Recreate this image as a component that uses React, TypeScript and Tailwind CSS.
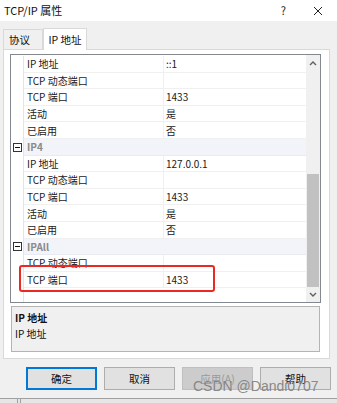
const font = { fontFamily: '"Noto Sans CJK SC", "Noto Sans", sans-serif' };

type Row = { kind: "item"; name: string; value: string } | { kind: "cat"; name: string };

const rows: Row[] = [
  { kind: "item", name: "IP 地址", value: "::1" },
  { kind: "item", name: "TCP 动态端口", value: "" },
  { kind: "item", name: "TCP 端口", value: "1433" },
  { kind: "item", name: "活动", value: "是" },
  { kind: "item", name: "已启用", value: "否" },
  { kind: "cat", name: "IP4" },
  { kind: "item", name: "IP 地址", value: "127.0.0.1" },
  { kind: "item", name: "TCP 动态端口", value: "" },
  { kind: "item", name: "TCP 端口", value: "1433" },
  { kind: "item", name: "活动", value: "是" },
  { kind: "item", name: "已启用", value: "否" },
  { kind: "cat", name: "IPAll" },
  { kind: "item", name: "TCP 动态端口", value: "" },
  { kind: "item", name: "TCP 端口", value: "1433" },
];

function MinusBox() {
  return (
    <div className="w-[9px] h-[9px] border border-[#333] bg-white flex items-center justify-center">
      <div className="w-[5px] h-px bg-[#111]" />
    </div>
  );
}

function PropRow({ row }: { row: Row }) {
  if (row.kind === "cat") {
    return (
      <div className="flex h-[16.6px] items-stretch">
        <div className="w-[13px] shrink-0 border-r border-[#e3e3e3] flex items-center justify-center bg-white">
          <MinusBox />
        </div>
        <div className="flex-1 bg-[#f2f4f9] border-b border-[#e8ebf2] flex items-center pl-[3px] text-[10px] font-bold text-[#8a8a8a]">
          {row.name}
        </div>
      </div>
    );
  }
  return (
    <div className="flex h-[16.6px] items-stretch text-[10px] text-[#1a1a1a]">
      <div className="w-[13px] shrink-0 border-r border-[#e3e3e3] bg-white" />
      <div className="w-[140px] shrink-0 border-r border-b border-[#f0f0f0] flex items-center pl-[3px]">
        {row.name}
      </div>
      <div className="flex-1 border-b border-[#f0f0f0] flex items-center pl-[2px]">{row.value}</div>
    </div>
  );
}

function Chevron({ up }: { up?: boolean }) {
  return (
    <svg width="8" height="5" viewBox="0 0 8 5">
      <path
        d={up ? "M1 4 L4 1 L7 4" : "M1 1 L4 4 L7 1"}
        fill="none"
        stroke="#606060"
        strokeWidth="1.4"
      />
    </svg>
  );
}

function Button({ label, primary, disabled }: { label: string; primary?: boolean; disabled?: boolean }) {
  const cls = primary
    ? "border-2 border-[#0078d7] bg-[#e1e1e1] text-[#111]"
    : disabled
      ? "border border-[#bfbfbf] bg-[#cccccc] text-[#9a9a9a]"
      : "border border-[#adadad] bg-[#e1e1e1] text-[#111]";
  return (
    <div className={`w-[71px] h-[23px] flex items-center justify-center text-[10.5px] ${cls}`}>{label}</div>
  );
}

export default function App() {
  return (
    <div className="relative w-[337px] h-[403px] overflow-hidden bg-[#f0f0f0] flex flex-col" style={font}>
      <div className="h-[21px] bg-white flex items-center pl-[4px] shrink-0">
        <span className="text-[11px] text-[#111]">TCP/IP 属性</span>
        <span className="ml-auto text-[11px] text-[#222] mr-[27px]">?</span>
        <svg width="10" height="10" viewBox="0 0 10 10" className="mr-[14px]">
          <path d="M1 1 L9 9 M9 1 L1 9" stroke="#222" strokeWidth="1" />
        </svg>
      </div>

      <div className="flex items-end pl-[3px] pt-[7px] shrink-0">
        <div className="w-[40px] h-[20px] border border-b-0 border-[#d9d9d9] bg-[#f0f0f0] flex items-center pl-[5px] text-[10.5px] text-[#111]">
          协议
        </div>
        <div className="relative z-10 -mb-px w-[44px] h-[22px] border border-b-0 border-[#d9d9d9] bg-white flex items-center justify-center text-[10.5px] text-[#111]">
          IP 地址
        </div>
      </div>

      <div className="ml-[3px] w-[327px] h-[310px] border border-[#d9d9d9] bg-white pl-[6px] pt-[4px] shrink-0">
        <div className="w-[311px] h-[249px] border border-[#828790] flex">
          <div className="w-[295px] flex flex-col pt-[1px]">
            {rows.map((r, i) => (
              <PropRow key={i} row={r} />
            ))}
            <div className="flex flex-1">
              <div className="w-[13px] border-r border-[#e3e3e3]" />
            </div>
          </div>
          <div className="w-[14px] bg-[#f0f0f0] flex flex-col items-center">
            <div className="h-[17px] flex items-center justify-center">
              <Chevron up />
            </div>
            <div className="h-[102px]" />
            <div className="w-[12px] h-[113px] bg-[#c1c1c1]" />
            <div className="flex-1 flex items-center justify-center">
              <Chevron />
            </div>
          </div>
        </div>
        <div className="ml-px mt-[3px] w-[309px] h-[46px] border border-[#b4b4b4] bg-[#f0f0f0] pl-[3px] pt-[3px] text-[10px] text-[#111]">
          <div className="font-bold leading-[16px]">IP 地址</div>
          <div className="leading-[16px]">IP 地址</div>
        </div>
      </div>

      <div className="flex gap-[7px] pl-[26px] mt-[8px] shrink-0">
        <Button label="确定" primary />
        <Button label="取消" />
        <Button label="应用(A)" disabled />
        <Button label="帮助" />
      </div>

      <div className="mt-auto h-[5px] border-t border-[#a0a0a0] bg-[#e6e6e6] flex pl-[17px] gap-[2px] shrink-0">
        <div className="w-px h-full bg-[#a0a0a0]" />
        <div className="w-px h-full bg-[#a0a0a0]" />
      </div>

      <div className="absolute left-[19px] top-[265px] w-[196px] h-[27px] border-2 border-[#ea2a22] rounded-[3px]" />

      <div
        className="absolute left-[193px] top-[378px] text-[14px] leading-[16px] text-[#7d7d7d]/90"
        style={{ fontFamily: '"Liberation Sans", Arial, sans-serif' }}
      >
        CSDN @Dandi0707
      </div>
    </div>
  );
}
